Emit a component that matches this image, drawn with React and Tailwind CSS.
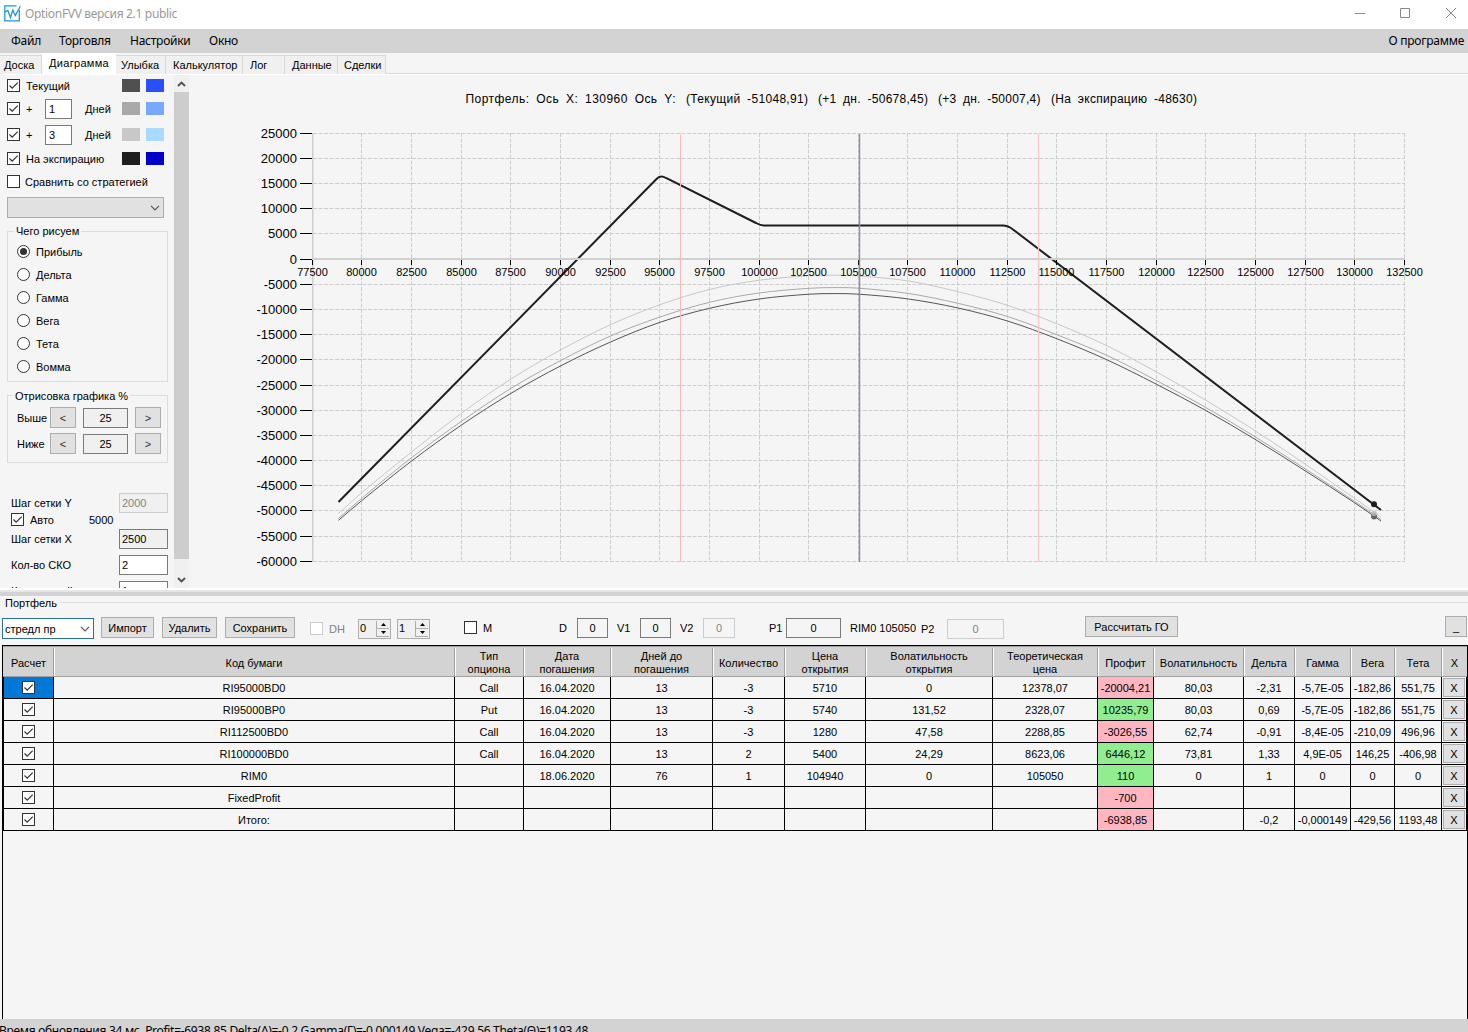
import React from "react";

const CURVE_X = [338.5, 362.5, 412, 461.5, 511, 561, 610.5, 660, 709.5, 759, 809, 835, 859, 908.5, 958, 1007.5, 1057.5, 1106.7, 1156, 1205.5, 1255, 1305, 1354.5, 1381];
const CURRENT = [520.3, 500, 460.7, 425, 393.3, 365.7, 342, 322.3, 308.3, 299, 294.2, 293.6, 294.2, 299, 308, 321, 339, 359.7, 384, 410.3, 439.3, 470.7, 502.7, 521];
const PLUS_ONE = [518.5, 497.7, 457.3, 421.3, 388.3, 360.3, 336, 317, 302.3, 293, 288.3, 287.6, 288.2, 293.5, 303.3, 316.5, 335, 355.3, 380.3, 407.3, 436.7, 468.7, 501.3, 519.5];
const PLUS_THREE = [513.5, 492, 451.7, 413.3, 379, 349.7, 324.7, 304.7, 289.5, 280.3, 275.8, 275.2, 276, 281, 291.7, 305.3, 324, 345.7, 371.7, 400, 430.7, 464, 498.3, 517];

function smooth(ys) {
  const p = ys.map((y, i) => [CURVE_X[i], y]);
  const slope = p.map((_, i) => {
    const a = p[Math.max(0, i - 1)];
    const b = p[Math.min(p.length - 1, i + 1)];
    return (b[1] - a[1]) / (b[0] - a[0]);
  });
  let d = `M${p[0][0]} ${p[0][1]}`;
  for (let i = 1; i < p.length; i++) {
    const h = (p[i][0] - p[i - 1][0]) / 3;
    d += ` C${p[i - 1][0] + h} ${p[i - 1][1] + slope[i - 1] * h} ${p[i][0] - h} ${p[i][1] - slope[i] * h} ${p[i][0]} ${p[i][1]}`;
  }
  return d;
}

const X_TICKS = Array.from({ length: 23 }, (_, i) => ({ v: 77500 + i * 2500, x: Math.floor(312.3 + i * 49.64) + 0.5 }));
const Y_TICKS = Array.from({ length: 18 }, (_, i) => ({ v: 25000 - i * 5000, y: Math.floor(133.2 + i * 25.18) + 0.5 }));

const LEGEND = [
  { x: 465.5, w: 210, text: "Портфель: Ось X: 130960 Ось Y:" },
  { x: 686, w: 122, text: "(Текущий -51048,91)" },
  { x: 818, w: 110, text: "(+1 дн. -50678,45)" },
  { x: 938, w: 102.5, text: "(+3 дн. -50007,4)" },
  { x: 1051, w: 146, text: "(На экспирацию -48630)" },
];

function Chart() {
  return (
    <svg className="block h-[513px] w-[1279px] shrink-0 font-['Liberation_Sans',sans-serif]" viewBox="189 75 1279 513">
      <g fontSize="12" className="[word-spacing:3px]">
        {LEGEND.map((l) => <text key={l.x} x={l.x} y="103" textLength={l.w}>{l.text}</text>)}
      </g>
      <g stroke="#cdcdcd" strokeDasharray="4 1.5">
        {X_TICKS.slice(1).map((t) => <line key={t.v} x1={t.x} x2={t.x} y1="133" y2="562" />)}
        {Y_TICKS.map((t) => <line key={t.v} x1="313" x2="1405" y1={t.y} y2={t.y} />)}
      </g>
      <path d={smooth(PLUS_THREE)} fill="none" stroke="#c8c8c8" />
      <path d={smooth(PLUS_ONE)} fill="none" stroke="#a9a9a9" />
      <path d={smooth(CURRENT)} fill="none" stroke="#555" />
      <circle cx="1374" cy="516.4" r="3" fill="#666" />
      <circle cx="1374" cy="513.5" r="2.6" fill="#b8b8b8" opacity="0.8" />
      <path d="M338.5 502 L656.5 179 Q660.5 174.6 666 178 L756 223 Q760.5 225.5 764 225.5 L1002 225.5 Q1008 225.3 1013 229.5 L1381 510" fill="none" stroke="#1e1e1e" strokeWidth="2" />
      <circle cx="1374" cy="504.3" r="3" fill="#1e1e1e" />
      <rect x="312" y="133" width="1.5" height="429" fill="#cfcfcf" />
      <rect x="313" y="258" width="1092" height="2" fill="#d0d0d0" />
      <g stroke="#000">
        {Y_TICKS.map((t) => <line key={t.v} x1="300" x2="312" y1={t.y} y2={t.y} />)}
        {X_TICKS.map((t) => <line key={t.v} x1={t.x} x2={t.x} y1="260" y2="265" />)}
      </g>
      <g fontSize="13" textAnchor="end">
        {Y_TICKS.map((t) => <text key={t.v} x="297" y={t.y + 4.5}>{t.v}</text>)}
      </g>
      <g fontSize="11" textAnchor="middle">
        {X_TICKS.map((t) => <text key={t.v} x={t.x} y="276">{t.v}</text>)}
      </g>
      <line x1="680.5" x2="680.5" y1="134" y2="562" stroke="#ffb6c1" />
      <line x1="1038.5" x2="1038.5" y1="134" y2="562" stroke="#ffc3cc" strokeWidth="1.3" />
      <line x1="859.5" x2="859.5" y1="134" y2="562" stroke="#8c8ca0" strokeWidth="1.4" />
    </svg>
  );
}

function Check({ on = true, disabled = false }) {
  return (
    <span className={`block size-[13px] shrink-0 border bg-white ${disabled ? "border-[#cccccc]" : "border-[#333333]"}`}>
      {on && (
        <svg viewBox="0 0 11 11" className="block size-[11px]" fill="none" stroke="#333" strokeWidth="1.2">
          <path d="M1.5 5.5 L4.2 8.2 L9.7 2.7" />
        </svg>
      )}
    </span>
  );
}

function Radio({ on }) {
  return (
    <span className="flex size-[13px] shrink-0 items-center justify-center rounded-full border border-[#333333] bg-white">
      {on && <span className="block size-[7px] rounded-full bg-[#333333]" />}
    </span>
  );
}

function Chevron() {
  return (
    <svg viewBox="0 0 10 6" className="h-[6px] w-[10px] shrink-0" fill="none" stroke="#555" strokeWidth="1.2">
      <path d="M1 0.8 L5 4.8 L9 0.8" />
    </svg>
  );
}

function Button({ children, className }) {
  return <button className={`h-[21px] shrink-0 border border-[#adadad] bg-[#e1e1e1] text-center leading-[20px] whitespace-nowrap ${className}`}>{children}</button>;
}

function Box({ children, className }) {
  return <div className={`h-[20px] shrink-0 border leading-[18px] ${className}`}>{children}</div>;
}

function SeriesRow({ label, days, dark, blue, height }) {
  return (
    <div className={`flex items-center pl-[7px] ${height}`}>
      <Check />
      {days ? (
        <div className="ml-[6px] flex w-[96px] items-center">
          <span className="w-[19px]">+</span>
          <Box className="w-[27px] border-[#7a7a7a] bg-white pl-[3px]">{days}</Box>
          <span className="ml-[13px]">Дней</span>
        </div>
      ) : (
        <span className="ml-[6px] w-[96px] whitespace-nowrap">{label}</span>
      )}
      <span className={`h-[13px] w-[18px] ${dark}`} />
      <span className={`ml-[6px] h-[13px] w-[18px] ${blue}`} />
    </div>
  );
}

function RangeRow({ label }) {
  return (
    <div className="mb-[5px] flex h-[21px] items-center pl-[9px]">
      <span className="w-[33px]">{label}</span>
      <Button className="w-[26px] text-[#333]">&lt;</Button>
      <Box className="ml-[7px] w-[45px] border-[#7a7a7a] bg-[#f0f0f0] text-center">25</Box>
      <Button className="ml-[7px] w-[26px] text-[#333]">&gt;</Button>
    </div>
  );
}

function Sidebar() {
  return (
    <div className="h-[513px] w-[174px] shrink-0 overflow-hidden">
      <SeriesRow label="Текущий" dark="bg-[#505050]" blue="bg-[#2850ff]" height="h-[21px]" />
      <SeriesRow days="1" dark="bg-[#a9a9a9]" blue="bg-[#78a8ff]" height="h-[25px]" />
      <SeriesRow days="3" dark="bg-[#c8c8c8]" blue="bg-[#aadaff]" height="h-[27px]" />
      <SeriesRow label="На экспирацию" dark="bg-[#1e1e1e]" blue="bg-[#0000c8]" height="h-[21px]" />
      <div className="flex h-[25px] items-center gap-[5px] pl-[7px] whitespace-nowrap">
        <Check on={false} />
        <span>Сравнить со стратегией</span>
      </div>
      <div className="mt-[3px] ml-[7px] flex h-[21px] w-[157px] items-center justify-end border border-[#adadad] bg-[#e1e1e1] pr-[3px]">
        <Chevron />
      </div>
      <fieldset className="mt-[7px] ml-[7px] h-[157px] w-[161px] border border-[#dcdcdc]">
        <legend className="ml-[6px] h-[13px] px-[2px] leading-[13px]">Чего рисуем</legend>
        <div className="pt-[2px] pl-[9px]">
          {["Прибыль", "Дельта", "Гамма", "Вега", "Тета", "Вомма"].map((name, i) => (
            <div key={name} className="flex h-[23px] items-center gap-[6px]">
              <Radio on={i === 0} />
              {name}
            </div>
          ))}
        </div>
      </fieldset>
      <fieldset className="mt-[7px] ml-[7px] h-[74px] w-[161px] border border-[#dcdcdc]">
        <legend className="ml-[5px] h-[13px] px-[2px] leading-[14px] whitespace-nowrap">Отрисовка графика %</legend>
        <div className="pt-[5px]">
          <RangeRow label="Выше" />
          <RangeRow label="Ниже" />
        </div>
      </fieldset>
      <div className="mt-[30px] flex h-[20px] items-center pl-[11px]">
        <span className="w-[108px]">Шаг сетки Y</span>
        <Box className="w-[49px] border-[#cccccc] bg-[#f0f0f0] pl-[2px] text-[#838383]">2000</Box>
      </div>
      <div className="flex h-[13px] items-center pl-[11px]">
        <Check />
        <span className="ml-[6px] w-[59px]">Авто</span>
        <span>5000</span>
      </div>
      <div className="mt-[3px] flex h-[20px] items-center pl-[11px]">
        <span className="w-[108px]">Шаг сетки X</span>
        <Box className="w-[49px] border-[#7a7a7a] bg-[#f0f0f0] pl-[2px]">2500</Box>
      </div>
      <div className="mt-[6px] flex h-[20px] items-center pl-[11px]">
        <span className="w-[108px]">Кол-во СКО</span>
        <Box className="w-[49px] border-[#7a7a7a] bg-white pl-[2px]">2</Box>
      </div>
      <div className="mt-[6px] flex h-[20px] items-center pl-[11px]">
        <span className="w-[108px]">Кол-во дней</span>
        <Box className="w-[49px] border-[#7a7a7a] bg-white pl-[2px]">1</Box>
      </div>
    </div>
  );
}

function ScrollBar() {
  return (
    <div className="flex h-[513px] w-[15px] shrink-0 flex-col items-center bg-[#f0f0f0]">
      <div className="flex h-[17px] shrink-0 items-center">
        <svg viewBox="0 0 9 6" className="h-[6px] w-[9px]" fill="none" stroke="#505050" strokeWidth="1.8"><path d="M1 5 L4.5 1.5 L8 5" /></svg>
      </div>
      <div className="h-[467px] w-full shrink-0 bg-[#cdcdcd]" />
      <svg viewBox="0 0 9 6" className="mt-[18px] h-[6px] w-[9px] shrink-0" fill="none" stroke="#505050" strokeWidth="1.8"><path d="M1 1 L4.5 4.5 L8 1" /></svg>
    </div>
  );
}

const TABS = [
  { name: "Доска", box: "w-[42px] pl-[4px]" },
  { name: "Диаграмма", box: "w-[74px] tracking-[0.3px]", active: true },
  { name: "Улыбка", box: "w-[50px] pl-[5px]" },
  { name: "Калькулятор", box: "w-[77px] pl-[7px]" },
  { name: "Лог", box: "w-[42px] pl-[7px]" },
  { name: "Данные", box: "w-[53px] pl-[7px]" },
  { name: "Сделки", box: "w-[48px] pl-[6px]" },
];

function Spinner({ value, className }) {
  return (
    <div className={`flex h-[20px] w-[33px] shrink-0 justify-between border border-[#adadad] bg-[#f0f0f0] p-px ${className}`}>
      <span className="leading-[15px]">{value}</span>
      <span className="flex w-[13px] flex-col">
        <span className="flex h-[8px] items-center justify-center border-b border-l border-[#adadad]"><svg viewBox="0 0 5 3" className="h-[3px] w-[5px]"><path d="M0 3 L2.5 0 L5 3Z" /></svg></span>
        <span className="flex h-[8px] items-center justify-center border-b border-l border-[#adadad]"><svg viewBox="0 0 5 3" className="h-[3px] w-[5px]"><path d="M0 0 L2.5 3 L5 0Z" /></svg></span>
      </span>
    </div>
  );
}

function Toolbar() {
  return (
    <div className="flex h-[28px] items-start whitespace-nowrap">
      <div className="mt-[1px] ml-[2px] flex h-[21px] w-[92px] shrink-0 items-center justify-between border border-[#2b6ea8] bg-white pr-[3px] pl-[2px]">
        <span>стредл пр</span>
        <Chevron />
      </div>
      <Button className="ml-[7px] w-[53px]">Импорт</Button>
      <Button className="ml-[8px] w-[55px]">Удалить</Button>
      <Button className="ml-[8px] w-[70px]">Сохранить</Button>
      <div className="mt-[5px] ml-[15px] flex h-[13px] w-[48px] shrink-0 items-center gap-[6px] text-[#838383]"><Check on={false} disabled />DH</div>
      <Spinner value="0" className="mt-[2px]" />
      <Spinner value="1" className="mt-[2px] ml-[6px]" />
      <div className="mt-[4px] ml-[34px] flex h-[13px] w-[95px] shrink-0 items-center gap-[6px]"><Check on={false} />M</div>
      <span className="mt-[4px] w-[18px] shrink-0">D</span>
      <Box className="mt-[1px] w-[31px] border-[#7a7a7a] text-center">0</Box>
      <span className="mt-[4px] ml-[9px] w-[23px] shrink-0">V1</span>
      <Box className="mt-[1px] w-[31px] border-[#7a7a7a] text-center">0</Box>
      <span className="mt-[4px] ml-[9px] w-[23px] shrink-0">V2</span>
      <Box className="mt-[1px] w-[32px] border-[#cccccc] text-center text-[#838383]">0</Box>
      <span className="mt-[4px] ml-[34px] w-[17px] shrink-0">P1</span>
      <Box className="mt-[1px] w-[55px] border-[#7a7a7a] text-center">0</Box>
      <span className="mt-[4px] ml-[9px] w-[71px] shrink-0">RIM0 105050</span>
      <span className="mt-[5px] w-[26px] shrink-0">P2</span>
      <Box className="mt-[2px] w-[57px] border-[#cccccc] text-center text-[#838383]">0</Box>
      <Button className="-mt-px ml-[81px] w-[93px]">Рассчитать ГО</Button>
      <Button className="-mt-px ml-[267px] w-[22px]">_</Button>
    </div>
  );
}

const HEADERS = ["Расчет", "Код бумаги", "Тип\nопциона", "Дата\nпогашения", "Дней до\nпогашения", "Количество", "Цена\nоткрытия", "Волатильность\nоткрытия", "Теоретическая\nцена", "Профит", "Волатильность", "Дельта", "Гамма", "Вега", "Тета", "X"];
const ROWS = [
  ["RI95000BD0", "Call", "16.04.2020", "13", "-3", "5710", "0", "12378,07", "-20004,21", "80,03", "-2,31", "-5,7E-05", "-182,86", "551,75"],
  ["RI95000BP0", "Put", "16.04.2020", "13", "-3", "5740", "131,52", "2328,07", "10235,79", "80,03", "0,69", "-5,7E-05", "-182,86", "551,75"],
  ["RI112500BD0", "Call", "16.04.2020", "13", "-3", "1280", "47,58", "2288,85", "-3026,55", "62,74", "-0,91", "-8,4E-05", "-210,09", "496,96"],
  ["RI100000BD0", "Call", "16.04.2020", "13", "2", "5400", "24,29", "8623,06", "6446,12", "73,81", "1,33", "4,9E-05", "146,25", "-406,98"],
  ["RIM0", "", "18.06.2020", "76", "1", "104940", "0", "105050", "110", "0", "1", "0", "0", "0"],
  ["FixedProfit", "", "", "", "", "", "", "", "-700", "", "", "", "", ""],
  ["Итого:", "", "", "", "", "", "", "", "-6938,85", "", "-0,2", "-0,000149", "-429,56", "1193,48"],
];
const COLS = "grid grid-cols-[50px_401px_69px_87px_102px_72px_81px_127px_105px_56px_90px_51px_56px_44px_47px_25px]";

function cellColor(col, value) {
  if (col !== 8) return "";
  return value.startsWith("-") ? "bg-[#ffb6c1]" : "bg-[#90ee90]";
}

function Portfolio() {
  return (
    <div className="ml-[2px] h-[374px] w-[1466px] shrink-0 border-x border-t border-black">
      <div className={`${COLS} h-[31px] w-[1464px] border-y border-[#a0a0a0] bg-[#d3d3d3] pl-px`}>
        {HEADERS.map((h, i) => (
          <div key={i} className={`my-px flex items-center justify-center pt-[2px] text-center leading-[13px] whitespace-pre ${i < 15 ? "border-r border-[#a0a0a0] shadow-[1px_0_0_#fff]" : ""}`}>{h}</div>
        ))}
      </div>
      <div className="w-[1464px] border-l border-black">
        {ROWS.map((row, r) => (
          <div key={r} className={`${COLS} h-[22px] leading-[22px]`}>
            <div className={`flex items-center justify-center border-r border-b border-black ${r === 0 ? "bg-[#0078d7]" : ""}`}><Check /></div>
            {row.map((v, c) => (
              <div key={c} className={`h-[22px] border-r border-b border-black text-center whitespace-nowrap ${cellColor(c, v)}`}>{v}</div>
            ))}
            <div className="border-r border-b border-black p-px">
              <button className="block h-[19px] w-[22px] border border-[#adadad] bg-[#e1e1e1] text-center leading-[18px]">X</button>
            </div>
          </div>
        ))}
      </div>
    </div>
  );
}

export default function App() {
  return (
    <div className="flex h-[1032px] w-[1468px] flex-col overflow-hidden bg-[#f5f5f5] font-['Liberation_Sans',sans-serif] text-[11px] leading-[14px] text-black">
      <div className="flex h-[29px] shrink-0 items-center bg-white font-['Noto_Sans',sans-serif]">
        <svg viewBox="0 0 17 17" className="mb-[3px] ml-[4px] size-[17px]" fill="none" stroke="#1c97d4" strokeWidth="1.3">
          <path d="M12.5 0.8 H0.8 V15.8 H15.3 V5" />
          <path d="M1 7 L3.8 5.5 L6.5 12.5 L8.8 5 L11.3 10.5 L16.3 1.2" />
        </svg>
        <span className="mb-px ml-[4px] text-[12px] tracking-[-0.33px] text-[#999]">OptionFVV версия 2.1 public</span>
        <svg viewBox="0 0 102 12" className="mr-[11px] mb-[3px] ml-auto h-[12px] w-[102px]" fill="none" stroke="#888">
          <path d="M0 6.5 H10 M45.5 1.5 H54.5 V10.500 H45.5Z M91 1 L101 11 M101 1 L91 11" />
        </svg>
      </div>
      <div className="flex h-[24px] shrink-0 items-center bg-[#d3d3d3] font-['Noto_Sans',sans-serif] text-[12px] tracking-[-0.25px] whitespace-nowrap">
        <span className="ml-[11px] w-[48px]">Файл</span>
        <span className="w-[71px]">Торговля</span>
        <span className="w-[79px]">Настройки</span>
        <span>Окно</span>
        <span className="mr-[4px] ml-auto">О программе</span>
      </div>
      <div className="flex h-[22px] shrink-0 items-end border-b border-white shadow-[inset_0_-1px_0_#d9d9d9]">
        {TABS.map((t) =>
          t.active ? (
            <div key={t.name} className={`h-[21px] bg-white text-center leading-[20px] ${t.box}`}>{t.name}</div>
          ) : (
            <div key={t.name} className={`h-[19px] border-t border-r border-[#d9d9d9] bg-[#f0f0f0] leading-[18px] whitespace-nowrap ${t.box}`}>{t.name}</div>
          )
        )}
      </div>
      <div className="flex h-[513px] shrink-0">
        <Sidebar />
        <ScrollBar />
        <Chart />
      </div>
      <div className="h-[8px] shrink-0 border-t-2 border-b-4 border-t-white border-b-[#d3d3d3] bg-[#e6e6e6]" />
      <div className="flex h-[13px] shrink-0 items-center">
        <span className="ml-[5px]">Портфель</span>
        <span className="ml-[3px] h-px grow bg-[#dcdcdc]" />
      </div>
      <div className="h-[36px] shrink-0 pt-[8px]">
        <Toolbar />
      </div>
      <Portfolio />
      <div className="h-[13px] shrink-0 overflow-hidden bg-[#d3d3d3] font-['Noto_Sans',sans-serif] text-[12px] leading-[16px] whitespace-nowrap">
        <div className="-ml-px pt-[4px] tracking-[-0.3px]">{"Время обновления 34 мс.  Profit=-6938,85 Delta(Δ)=-0,2 Gamma(Γ)=-0,000149 Vega=-429,56 Theta(Θ)=1193,48"}</div>
      </div>
    </div>
  );
}
